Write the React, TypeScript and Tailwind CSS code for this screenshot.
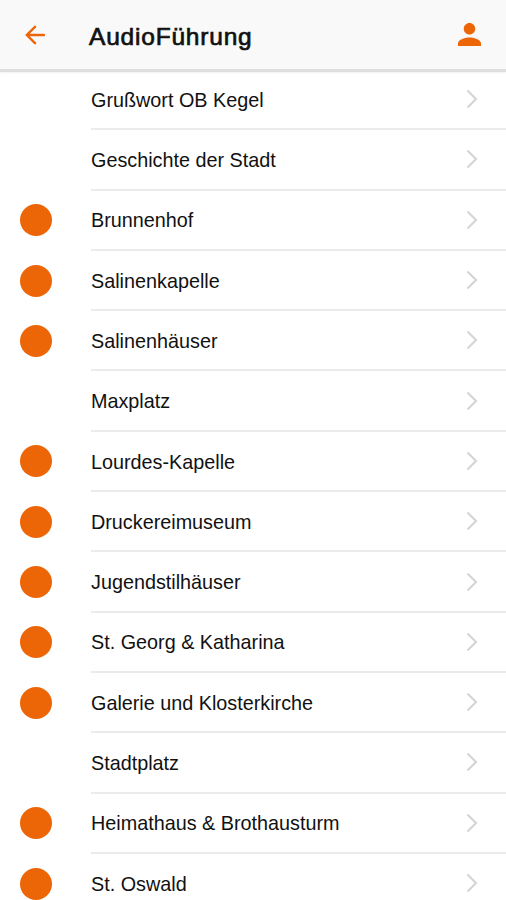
import { clsx } from 'clsx';

const stops = [
  { title: 'Grußwort OB Kegel', marker: false },
  { title: 'Geschichte der Stadt', marker: false },
  { title: 'Brunnenhof', marker: true },
  { title: 'Salinenkapelle', marker: true },
  { title: 'Salinenhäuser', marker: true },
  { title: 'Maxplatz', marker: false },
  { title: 'Lourdes-Kapelle', marker: true },
  { title: 'Druckereimuseum', marker: true },
  { title: 'Jugendstilhäuser', marker: true },
  { title: 'St. Georg & Katharina', marker: true },
  { title: 'Galerie und Klosterkirche', marker: true },
  { title: 'Stadtplatz', marker: false },
  { title: 'Heimathaus & Brothausturm', marker: true },
  { title: 'St. Oswald', marker: true },
];

export default function App() {
  return (
    <div className="flex flex-col w-[506px] h-[900px] overflow-hidden bg-white text-[#111] font-['Liberation_Sans',sans-serif]">
      {/* Header */}
      <header className="flex items-center shrink-0 h-[72px] pl-[25px] pr-[25px] bg-[#f9f9f9] border-b-3 border-[#dedede] shadow-[0_1px_2px_rgba(0,0,0,0.06)]">
        <button aria-label="Zurück" className="w-16">
          <svg viewBox="0 0 20 20" className="w-5 h-5 fill-none stroke-[#ec6608] stroke-[2.4]">
            <path strokeLinecap="round" d="M19 10H2M10 1.8L1.8 10l8.2 8.2" />
          </svg>
        </button>
        <h1 className="flex-1 pt-1 text-[24.5px] leading-7 tracking-[0.8px] text-[#111] [-webkit-text-stroke:0.7px_#111]">AudioFührung</h1>
        <button aria-label="Profil">
          <svg viewBox="4 4 16 16" className="w-[23px] h-[23px] fill-[#ec6608]">
            <path d="M12 12c2.21 0 4-1.79 4-4s-1.79-4-4-4-4 1.79-4 4 1.79 4 4 4zm0 2c-2.67 0-8 1.34-8 4v2h16v-2c0-2.66-5.33-4-8-4z" />
          </svg>
        </button>
      </header>

      {/* Tour stops */}
      <ul className="-mt-[2px]">
        {stops.map((stop) => (
          <li key={stop.title} className="flex h-[60.3px] pl-5">
            <div className="flex items-center w-[71px] pb-px">
              <span className={clsx('w-8 h-8 rounded-full', stop.marker && 'bg-[#ec6608]')} />
            </div>
            <div className="flex flex-1 items-center justify-between pr-7 border-b-2 border-[#ebebeb]">
              <span className="pt-[3px] text-[19.8px]">{stop.title}</span>
              <svg viewBox="0 0 12 20" className="w-3 h-5 fill-none stroke-[#d6d6d6] stroke-[2.2]">
                <path d="M1.5 1.5l8.5 8.5-8.5 8.5" />
              </svg>
            </div>
          </li>
        ))}
      </ul>
    </div>
  );
}
